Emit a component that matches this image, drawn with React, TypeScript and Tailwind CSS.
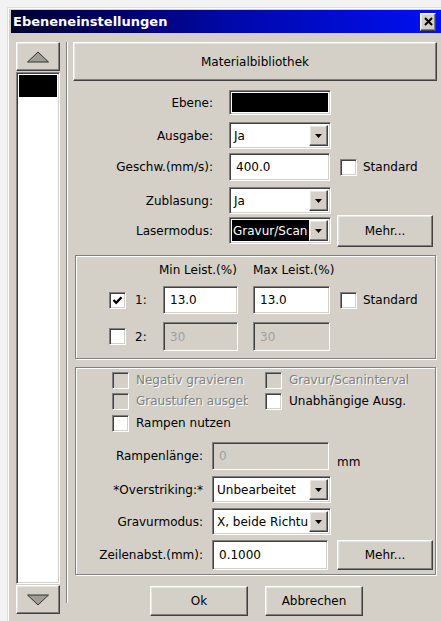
import React from "react";

// classic 3D borders
const raised =
  "border border-t-white border-l-white border-r-[#404040] border-b-[#404040] shadow-[inset_-1px_-1px_0_#808080,inset_1px_1px_0_#e8e6e0]";
const sunken =
  "border border-t-[#808080] border-l-[#808080] border-r-white border-b-white shadow-[inset_1px_1px_0_#404040,inset_-1px_-1px_0_#d4d0c8]";
const etched = "border border-[#808080] shadow-[inset_1px_1px_0_white,1px_1px_0_white]";
const disabledText = "text-[#808080] [text-shadow:1px_1px_0_white]";

function Button({ children, className = "" }: { children: React.ReactNode; className?: string }) {
  return (
    <div className={`${raised} bg-[#d4d0c8] flex items-center justify-center shrink-0 ${className}`}>
      {children}
    </div>
  );
}

function Arrow() {
  return (
    <svg width="7" height="4" viewBox="0 0 7 4">
      <polygon points="0,0 7,0 3.5,4" fill="black" />
    </svg>
  );
}

function Combo({
  value,
  className = "",
  selected = false,
}: {
  value: string;
  className?: string;
  selected?: boolean;
}) {
  return (
    <div className={`${sunken} bg-white h-[27px] flex p-[2px] shrink-0 ${className}`}>
      <div className="flex-1 min-w-0 flex items-center overflow-hidden">
        <span
          className={`whitespace-nowrap h-full flex items-center ${
            selected ? "bg-black text-white pl-[1px] pr-[4px] w-full" : "pl-[2px]"
          }`}
        >
          {value}
        </span>
      </div>
      <div className={`${raised} bg-[#d4d0c8] w-[19px] flex items-center justify-center`}>
        <Arrow />
      </div>
    </div>
  );
}

function Field({
  value,
  className = "",
  disabled = false,
}: {
  value: string;
  className?: string;
  disabled?: boolean;
}) {
  return (
    <div
      className={`${sunken} ${
        disabled ? "bg-[#d4d0c8] text-[#a0a0a0]" : "bg-white"
      } flex items-center pl-[6px] shrink-0 ${className}`}
    >
      {value}
    </div>
  );
}

function CheckBox({ checked = false, disabled = false }: { checked?: boolean; disabled?: boolean }) {
  return (
    <div
      className={`${sunken} ${disabled ? "bg-[#d4d0c8]" : "bg-white"} w-[17px] h-[17px] shrink-0 flex items-center justify-center`}
    >
      {checked && (
        <svg width="11" height="11" viewBox="0 0 11 11">
          <polyline points="1.5,5 4.2,7.8 9.5,2.2" fill="none" stroke="black" strokeWidth="2.4" />
        </svg>
      )}
    </div>
  );
}

function ScrollButton({ up }: { up: boolean }) {
  return (
    <Button className="w-[44px] h-[29px]">
      <svg width="24" height="12" viewBox="0 0 24 12">
        <polygon
          points={up ? "1.5,11 12,1 22.5,11" : "1.5,1 12,11 22.5,1"}
          fill="#a19d95"
          stroke="#303030"
          strokeWidth="1"
        />
      </svg>
    </Button>
  );
}

export default function App() {
  return (
    <div className="w-[441px] h-[621px] overflow-hidden bg-[#f2f2f2] pl-[7px] pt-[7px] text-[12px] text-black font-['DejaVu_Sans',sans-serif]">
      <div className="w-[434px] h-[614px] bg-[#d4d0c8] pl-[4px] pt-[3px] shadow-[inset_1px_1px_0_#e0ddd6,inset_2px_2px_0_white]">
        {/* title bar */}
        <div className="h-[23px] bg-gradient-to-r from-[#00002e] via-[#0008a8] to-[#0010f4] flex items-center justify-between pl-[2px] pr-[5px]">
          <span className="text-white font-bold text-[13px] leading-none">Ebeneneinstellungen</span>
          <Button className="w-[16px] h-[18px]">
            <svg width="9" height="9" viewBox="0 0 9 9">
              <path d="M1 1L8 8M8 1L1 8" stroke="black" strokeWidth="2" />
            </svg>
          </Button>
        </div>

        <div className="flex pl-[5px] pt-[9px]">
          {/* layer list */}
          <div className="flex flex-col w-[44px] gap-[1px]">
            <ScrollButton up />
            <div className={`${sunken} bg-white h-[512px] p-[2px]`}>
              <div className="h-[22px] bg-black" />
            </div>
            <ScrollButton up={false} />
          </div>

          <div className="ml-[6px] w-[2px] h-[561px] border-l border-l-[#808080] border-r border-r-white" />

          {/* settings */}
          <div className="ml-[5px] w-[364px] flex flex-col">
            <Button className="w-[364px] h-[39px]">Materialbibliothek</Button>

            <div className="flex items-center mt-[9px] h-[25px]">
              <span className="w-[140px] text-right">Ebene:</span>
              <div className={`${sunken} ml-[16px] w-[102px] h-[25px] p-[2px] bg-white`}>
                <div className="w-full h-full bg-black" />
              </div>
            </div>

            <div className="flex items-center mt-[7px] h-[27px]">
              <span className="w-[140px] text-right">Ausgabe:</span>
              <Combo value="Ja" className="ml-[16px] w-[102px]" />
            </div>

            <div className="flex items-center mt-[4px] h-[28px]">
              <span className="w-[140px] text-right">Geschw.(mm/s):</span>
              <Field value="400.0" className="ml-[16px] w-[101px] h-[28px]" />
              <div className="ml-[10px]">
                <CheckBox />
              </div>
              <span className="ml-[6px] w-[54px] overflow-hidden whitespace-nowrap">Standard</span>
            </div>

            <div className="flex items-center mt-[6px] h-[27px]">
              <span className="w-[140px] text-right">Zublasung:</span>
              <Combo value="Ja" className="ml-[16px] w-[102px]" />
            </div>

            <div className="flex items-center mt-[3px] h-[27px]">
              <span className="w-[140px] text-right">Lasermodus:</span>
              <Combo value="Gravur/Scan" selected className="ml-[16px] w-[102px]" />
              <Button className="ml-[6px] w-[96px] h-[32px]">Mehr...</Button>
            </div>

            {/* power */}
            <div className={`${etched} ml-[2px] mt-[11px] w-[361px] h-[104px] flex flex-col`}>
              <div className="flex mt-[6px] h-[16px] items-center pl-[83px]">
                <span className="w-[94px]">Min Leist.(%)</span>
                <span>Max Leist.(%)</span>
              </div>
              <div className="flex items-center mt-[8px] h-[28px] pl-[33px]">
                <CheckBox checked />
                <span className="ml-[9px] w-[28px]">1:</span>
                <Field value="13.0" className="w-[75px] h-[28px]" />
                <Field value="13.0" className="ml-[15px] w-[77px] h-[28px]" />
                <div className="ml-[10px]">
                  <CheckBox />
                </div>
                <span className="ml-[6px] w-[54px] overflow-hidden whitespace-nowrap">Standard</span>
              </div>
              <div className="flex items-center mt-[8px] h-[29px] pl-[33px]">
                <CheckBox />
                <span className="ml-[9px] w-[28px]">2:</span>
                <Field value="30" disabled className="w-[75px] h-[29px]" />
                <Field value="30" disabled className="ml-[15px] w-[77px] h-[29px]" />
              </div>
            </div>

            {/* engraving */}
            <div className={`${etched} ml-[2px] mt-[8px] w-[361px] h-[208px] flex flex-col`}>
              <div className="flex items-center mt-[4px] h-[16px] pl-[36px]">
                <CheckBox disabled />
                <span className={`ml-[7px] w-[112px] overflow-hidden whitespace-nowrap ${disabledText}`}>
                  Negativ gravieren
                </span>
                <div className="ml-[17px]">
                  <CheckBox disabled />
                </div>
                <span className={`ml-[7px] w-[119px] overflow-hidden whitespace-nowrap ${disabledText}`}>
                  Gravur/Scanintervall
                </span>
              </div>
              <div className="flex items-center mt-[5px] h-[16px] pl-[36px]">
                <CheckBox disabled />
                <span className={`ml-[7px] w-[112px] overflow-hidden whitespace-nowrap ${disabledText}`}>
                  Graustufen ausgeben
                </span>
                <div className="ml-[17px]">
                  <CheckBox />
                </div>
                <span className="ml-[7px] whitespace-nowrap">Unabhängige Ausg.</span>
              </div>
              <div className="flex items-center mt-[6px] h-[16px] pl-[36px]">
                <CheckBox />
                <span className="ml-[7px] whitespace-nowrap">Rampen nutzen</span>
              </div>

              <div className="flex items-center mt-[11px] h-[28px]">
                <span className="w-[127px] text-right">Rampenlänge:</span>
                <Field value="0" disabled className="ml-[9px] w-[117px] h-[28px]" />
                <span className="ml-[8px] mt-[12px]">mm</span>
              </div>
              <div className="flex items-center mt-[6px] h-[27px]">
                <span className="w-[127px] text-right">*Overstriking:*</span>
                <Combo value="Unbearbeitet" className="ml-[9px] w-[119px]" />
              </div>
              <div className="flex items-center mt-[5px] h-[27px]">
                <span className="w-[127px] text-right">Gravurmodus:</span>
                <Combo value="X, beide Richtungen" className="ml-[9px] w-[119px]" />
              </div>
              <div className="flex items-center mt-[5px] h-[30px]">
                <span className="w-[127px] text-right">Zeilenabst.(mm):</span>
                <Field value="0.1000" className="ml-[9px] w-[116px] h-[30px]" />
                <Button className="ml-[9px] w-[96px] h-[30px]">Mehr...</Button>
              </div>
            </div>

            <div className="flex mt-[11px] pl-[77px] gap-[17px]">
              <Button className="w-[98px] h-[30px]">Ok</Button>
              <Button className="w-[98px] h-[30px]">Abbrechen</Button>
            </div>
          </div>
        </div>
      </div>
    </div>
  );
}
